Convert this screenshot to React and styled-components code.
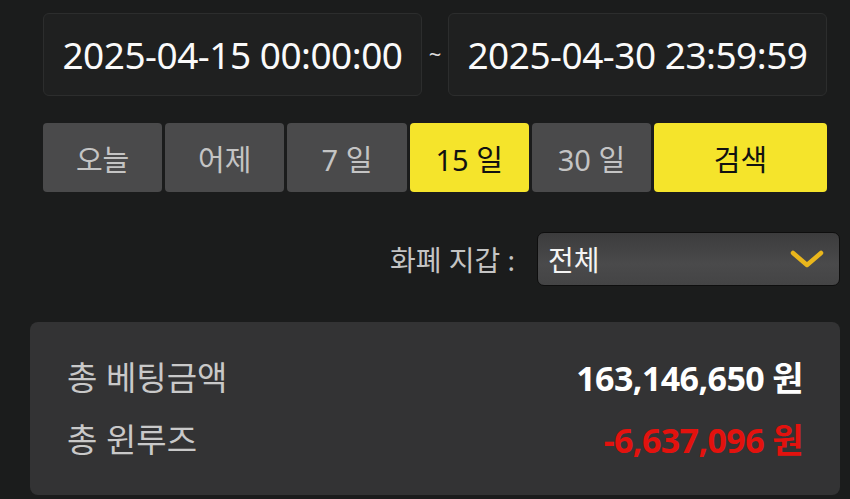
import React from "react";
import styled, { createGlobalStyle } from "styled-components";

const Global = createGlobalStyle`
  html, body {
    margin: 0;
    padding: 0;
    background: #1b1c1c;
  }
  body {
    font-family: "Noto Sans", "Noto Sans CJK KR", sans-serif;
    color: #fff;
  }
`;

const Page = styled.div`
  width: 850px;
  height: 499px;
  box-sizing: border-box;
  padding: 13px 10px 0 30px;
  overflow: hidden;
`;

const Inner = styled.div`
  margin: 0 13px 0 13px;
`;

const DateRow = styled.div`
  display: grid;
  grid-template-columns: 1fr 26px 1fr;
  align-items: center;
  height: 83px;
`;

const DateBox = styled.div`
  height: 100%;
  box-sizing: border-box;
  background: #1f2020;
  border: 1px solid #2c2d2d;
  border-radius: 6px;
  display: flex;
  align-items: center;
  justify-content: center;
  font-size: 37px;
  letter-spacing: -0.5px;
  color: #fafafa;
`;

const Tilde = styled.span`
  text-align: center;
  font-size: 22px;
  color: #ddd;
  line-height: 1;
  margin-top: -3px;
`;

const QuickRow = styled.div`
  display: grid;
  grid-template-columns: repeat(5, 1fr) 173px;
  gap: 3px;
  height: 69px;
  margin-top: 27px;
`;

const QuickButton = styled.button`
  border: none;
  border-radius: 4px;
  background: ${(p) => (p.$active ? "#f5e42b" : "#4a4a4b")};
  color: ${(p) => (p.$active ? "#111" : "#c4c4c4")};
  font-family: "Noto Sans", "Noto Sans CJK KR", sans-serif;
  font-size: 29px;
  padding: 0;
  cursor: pointer;
`;

const WalletRow = styled.div`
  display: flex;
  justify-content: flex-end;
  align-items: center;
  gap: 22px;
  margin-top: 40px;
  margin-left: 13px;
`;

const WalletLabel = styled.span`
  font-size: 28px;
  color: #c4c4c4;
`;

const Select = styled.div`
  width: 303px;
  height: 54px;
  box-sizing: border-box;
  border: 1px solid #0e0e0e;
  border-radius: 7px;
  background: linear-gradient(180deg, #3c3c3d 0%, #4a4a4b 60%, #444445 100%);
  display: flex;
  align-items: center;
  justify-content: space-between;
  padding: 0 14px 0 10px;
  font-size: 28px;
  font-weight: 400;
  color: #f4f4f4;
`;

const SummaryCard = styled.div`
  margin-top: 36px;
  height: 173px;
  box-sizing: border-box;
  background: #333334;
  border-radius: 8px;
  padding: 34px 37px 0 37px;
  display: flex;
  flex-direction: column;
  gap: 22px;
`;

const SummaryRow = styled.div`
  display: flex;
  justify-content: space-between;
  align-items: center;
  height: 40px;
`;

const SummaryLabel = styled.span`
  font-size: 33px;
  color: #c9c9c9;
`;

const SummaryValue = styled.span`
  font-size: 34px;
  font-weight: 700;
  letter-spacing: -0.6px;
  color: ${(p) => (p.$negative ? "#e3120e" : "#ffffff")};
`;

const Chevron = () => (
  <svg width="36" height="22" viewBox="0 0 36 22" aria-hidden="true">
    <path
      d="M4 5 L18 17 L32 5"
      fill="none"
      stroke="#e9b61c"
      strokeWidth="4.5"
      strokeLinecap="round"
      strokeLinejoin="round"
    />
  </svg>
);

const ranges = [
  { label: "오늘" },
  { label: "어제" },
  { label: "7 일" },
  { label: "15 일", active: true },
  { label: "30 일" },
];

export default function App() {
  return (
    <>
      <Global />
      <Page>
        <Inner>
          <DateRow>
            <DateBox>2025-04-15 00:00:00</DateBox>
            <Tilde>~</Tilde>
            <DateBox>2025-04-30 23:59:59</DateBox>
          </DateRow>
          <QuickRow>
            {ranges.map((r) => (
              <QuickButton key={r.label} $active={r.active}>
                {r.label}
              </QuickButton>
            ))}
            <QuickButton $active>검색</QuickButton>
          </QuickRow>
        </Inner>
        <WalletRow>
          <WalletLabel>화폐 지갑 :</WalletLabel>
          <Select>
            <span>전체</span>
            <Chevron />
          </Select>
        </WalletRow>
        <SummaryCard>
          <SummaryRow>
            <SummaryLabel>총 베팅금액</SummaryLabel>
            <SummaryValue>163,146,650 원</SummaryValue>
          </SummaryRow>
          <SummaryRow>
            <SummaryLabel>총 윈루즈</SummaryLabel>
            <SummaryValue $negative>-6,637,096 원</SummaryValue>
          </SummaryRow>
        </SummaryCard>
      </Page>
    </>
  );
}
